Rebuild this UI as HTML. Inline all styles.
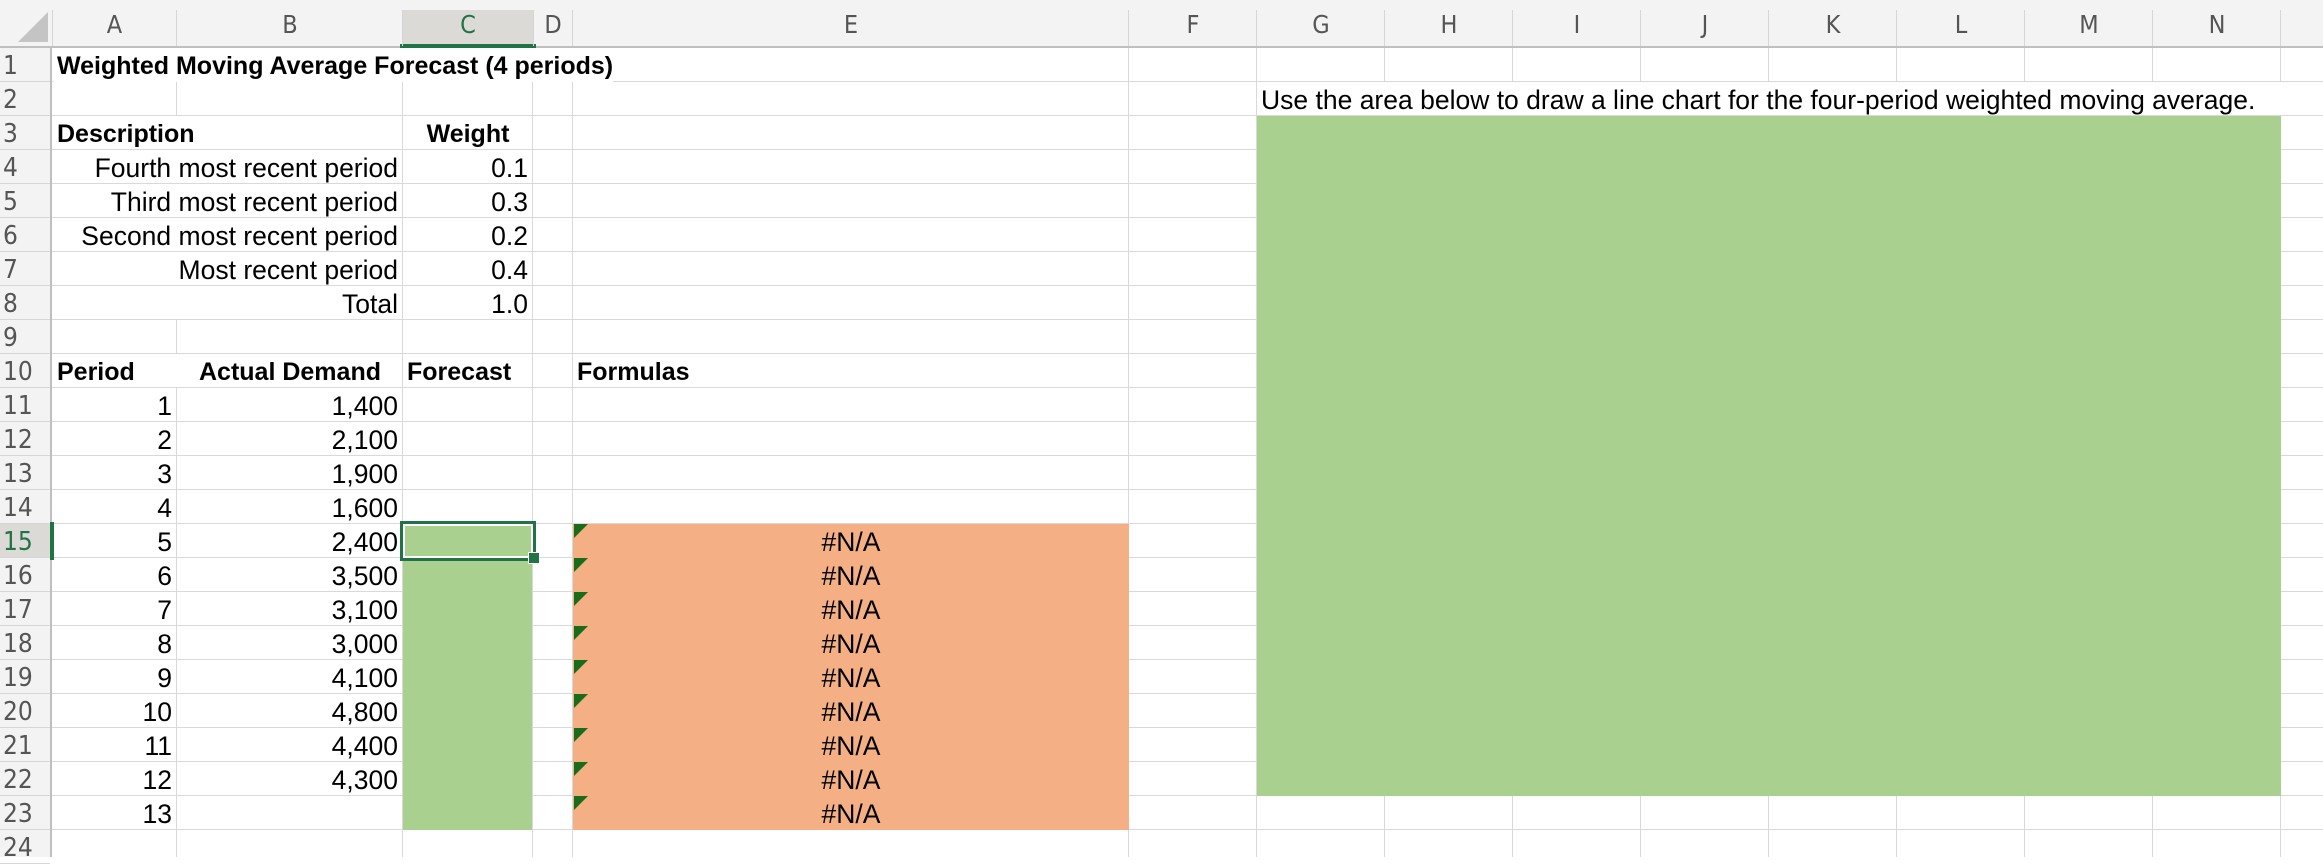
<!DOCTYPE html>
<html><head><meta charset="utf-8"><style>
*{margin:0;padding:0;box-sizing:border-box}
body{width:2323px;height:857px;overflow:hidden;background:#fff;font-family:"Liberation Sans",Arial,sans-serif;position:relative}
.a{position:absolute}
.grid{position:absolute;left:52px;top:48px;width:2271px;height:809px;background:repeating-linear-gradient(to bottom,transparent 0 33px,#d9d9d9 33px 34px)}
.v{position:absolute;top:48px;width:1px;height:809px;background:#d9d9d9}
.t{position:absolute;height:34px;line-height:36px;font-size:26.5px;color:#000;white-space:nowrap}
.r{text-align:right;padding-right:5px}
.l{padding-left:4px}
.b{font-weight:bold;font-size:25px}
.ch{position:absolute;top:0;height:46px;line-height:50px;text-align:center;font-size:25px;color:#555;font-family:"DejaVu Sans Condensed","Liberation Sans Narrow","Liberation Sans",sans-serif}
.cs{position:absolute;top:10px;width:1px;height:36px;background:#d6d6d6}
.rh{position:absolute;left:0;width:50px;height:34px;line-height:36px;font-size:26px;color:#555;padding-left:3px;font-family:"DejaVu Sans Condensed","Liberation Sans Narrow","Liberation Sans",sans-serif;border-bottom:1px solid #d6d6d6}
.tri{position:absolute;left:574px;width:0;height:0;border-top:14px solid #1a6b1a;border-right:14px solid transparent}
.na{position:absolute;left:573px;width:556px;text-align:center;height:34px;line-height:36px;font-size:26.5px}
</style></head><body>
<div class="grid"></div>
<div class="v" style="left:176px"></div><div class="v" style="left:402px"></div><div class="v" style="left:532px"></div><div class="v" style="left:572px"></div><div class="v" style="left:1128px"></div><div class="v" style="left:1256px"></div><div class="v" style="left:1384px"></div><div class="v" style="left:1512px"></div><div class="v" style="left:1640px"></div><div class="v" style="left:1768px"></div><div class="v" style="left:1896px"></div><div class="v" style="left:2024px"></div><div class="v" style="left:2152px"></div><div class="v" style="left:2280px"></div>

<div class="a" style="left:403px;top:524px;width:129px;height:306px;background:#a9d08e"></div>
<div class="a" style="left:573px;top:524px;width:556px;height:306px;background:#f4b084"></div>
<div class="a" style="left:1257px;top:116px;width:1024px;height:680px;background:#a9d08e"></div>

<div class="a" style="left:53px;top:48px;width:570px;height:33px;background:#fff"></div>
<div class="a" style="left:1257px;top:82px;width:1024px;height:33px;background:#fff"></div>
<div class="a" style="left:53px;top:116px;width:349px;height:203px;background:repeating-linear-gradient(to bottom,#fff 0 33px,#d9d9d9 33px 34px)"></div>
<div class="a" style="left:53px;top:354px;width:349px;height:33px;background:#fff"></div>

<div class="a" style="left:0;top:0;width:2323px;height:48px;background:#f3f3f3;border-bottom:2px solid #bfbfbf"></div>
<div class="a" style="left:0;top:48px;width:52px;height:809px;background:#f3f3f3;border-right:2px solid #bfbfbf"></div>
<div class="a" style="left:18px;top:12px;width:0;height:0;border-bottom:30px solid #c4c4c4;border-left:30px solid transparent"></div>
<div class="a" style="left:403px;top:10px;width:130px;height:36px;background:#dcdad7"></div>
<div class="a" style="left:400px;top:44px;width:136px;height:4px;background:#217346"></div>
<div class="cs" style="left:52px"></div><div class="cs" style="left:176px"></div><div class="cs" style="left:402px"></div><div class="cs" style="left:533px"></div><div class="cs" style="left:572px"></div><div class="cs" style="left:1128px"></div><div class="cs" style="left:1256px"></div><div class="cs" style="left:1384px"></div><div class="cs" style="left:1512px"></div><div class="cs" style="left:1640px"></div><div class="cs" style="left:1768px"></div><div class="cs" style="left:1896px"></div><div class="cs" style="left:2024px"></div><div class="cs" style="left:2152px"></div><div class="cs" style="left:2280px"></div>
<div class="ch" style="left:52px;width:125px">A</div>
<div class="ch" style="left:177px;width:226px">B</div>
<div class="ch" style="left:403px;width:130px;color:#217346">C</div>
<div class="ch" style="left:533px;width:40px">D</div>
<div class="ch" style="left:573px;width:556px">E</div>
<div class="ch" style="left:1129px;width:128px">F</div>
<div class="ch" style="left:1257px;width:128px">G</div>
<div class="ch" style="left:1385px;width:128px">H</div>
<div class="ch" style="left:1513px;width:128px">I</div>
<div class="ch" style="left:1641px;width:128px">J</div>
<div class="ch" style="left:1769px;width:128px">K</div>
<div class="ch" style="left:1897px;width:128px">L</div>
<div class="ch" style="left:2025px;width:128px">M</div>
<div class="ch" style="left:2153px;width:128px">N</div>

<div class="rh" style="top:48px">1</div><div class="rh" style="top:82px">2</div><div class="rh" style="top:116px">3</div><div class="rh" style="top:150px">4</div><div class="rh" style="top:184px">5</div><div class="rh" style="top:218px">6</div><div class="rh" style="top:252px">7</div><div class="rh" style="top:286px">8</div><div class="rh" style="top:320px">9</div><div class="rh" style="top:354px">10</div><div class="rh" style="top:388px">11</div><div class="rh" style="top:422px">12</div><div class="rh" style="top:456px">13</div><div class="rh" style="top:490px">14</div><div class="rh" style="top:524px;background:#dcdad7;color:#217346">15</div><div class="rh" style="top:558px">16</div><div class="rh" style="top:592px">17</div><div class="rh" style="top:626px">18</div><div class="rh" style="top:660px">19</div><div class="rh" style="top:694px">20</div><div class="rh" style="top:728px">21</div><div class="rh" style="top:762px">22</div><div class="rh" style="top:796px">23</div><div class="rh" style="top:830px">24</div>
<div class="a" style="left:50px;top:522px;width:4px;height:38px;background:#217346"></div>

<div class="t l b" style="left:53px;top:48px;background:#fff">Weighted Moving Average Forecast (4 periods)</div>
<div class="t l" style="left:1257px;top:82px">Use the area below to draw a line chart for the four-period weighted moving average.</div>
<div class="t l b" style="left:53px;top:116px">Description</div>
<div class="t b" style="left:403px;top:116px;width:130px;text-align:center">Weight</div>
<div class="t r" style="left:53px;top:150px;width:350px">Fourth most recent period</div>
<div class="t r" style="left:53px;top:184px;width:350px">Third most recent period</div>
<div class="t r" style="left:53px;top:218px;width:350px">Second most recent period</div>
<div class="t r" style="left:53px;top:252px;width:350px">Most recent period</div>
<div class="t r" style="left:53px;top:286px;width:350px">Total</div>
<div class="t r" style="left:403px;top:150px;width:130px">0.1</div>
<div class="t r" style="left:403px;top:184px;width:130px">0.3</div>
<div class="t r" style="left:403px;top:218px;width:130px">0.2</div>
<div class="t r" style="left:403px;top:252px;width:130px">0.4</div>
<div class="t r" style="left:403px;top:286px;width:130px">1.0</div>
<div class="t l b" style="left:53px;top:354px">Period</div>
<div class="t b" style="left:177px;top:354px;width:226px;text-align:center">Actual Demand</div>
<div class="t l b" style="left:403px;top:354px">Forecast</div>
<div class="t l b" style="left:573px;top:354px">Formulas</div>

<div class="t r" style="left:53px;top:388px;width:124px">1</div><div class="t r" style="left:177px;top:388px;width:226px">1,400</div>
<div class="t r" style="left:53px;top:422px;width:124px">2</div><div class="t r" style="left:177px;top:422px;width:226px">2,100</div>
<div class="t r" style="left:53px;top:456px;width:124px">3</div><div class="t r" style="left:177px;top:456px;width:226px">1,900</div>
<div class="t r" style="left:53px;top:490px;width:124px">4</div><div class="t r" style="left:177px;top:490px;width:226px">1,600</div>
<div class="t r" style="left:53px;top:524px;width:124px">5</div><div class="t r" style="left:177px;top:524px;width:226px">2,400</div>
<div class="t r" style="left:53px;top:558px;width:124px">6</div><div class="t r" style="left:177px;top:558px;width:226px">3,500</div>
<div class="t r" style="left:53px;top:592px;width:124px">7</div><div class="t r" style="left:177px;top:592px;width:226px">3,100</div>
<div class="t r" style="left:53px;top:626px;width:124px">8</div><div class="t r" style="left:177px;top:626px;width:226px">3,000</div>
<div class="t r" style="left:53px;top:660px;width:124px">9</div><div class="t r" style="left:177px;top:660px;width:226px">4,100</div>
<div class="t r" style="left:53px;top:694px;width:124px">10</div><div class="t r" style="left:177px;top:694px;width:226px">4,800</div>
<div class="t r" style="left:53px;top:728px;width:124px">11</div><div class="t r" style="left:177px;top:728px;width:226px">4,400</div>
<div class="t r" style="left:53px;top:762px;width:124px">12</div><div class="t r" style="left:177px;top:762px;width:226px">4,300</div>
<div class="t r" style="left:53px;top:796px;width:124px">13</div>

<div class="na" style="top:524px">#N/A</div><div class="na" style="top:558px">#N/A</div><div class="na" style="top:592px">#N/A</div><div class="na" style="top:626px">#N/A</div><div class="na" style="top:660px">#N/A</div><div class="na" style="top:694px">#N/A</div><div class="na" style="top:728px">#N/A</div><div class="na" style="top:762px">#N/A</div><div class="na" style="top:796px">#N/A</div>
<div class="tri" style="top:524px"></div><div class="tri" style="top:558px"></div><div class="tri" style="top:592px"></div><div class="tri" style="top:626px"></div><div class="tri" style="top:660px"></div><div class="tri" style="top:694px"></div><div class="tri" style="top:728px"></div><div class="tri" style="top:762px"></div><div class="tri" style="top:796px"></div>

<div class="a" style="left:400px;top:521px;width:136px;height:40px;border:3px solid #217346"></div>
<div class="a" style="left:403px;top:524px;width:130px;height:34px;border:2px solid #fff"></div>
<div class="a" style="left:529px;top:553px;width:10px;height:10px;background:#217346;outline:1px solid #fff"></div>
</body></html>
